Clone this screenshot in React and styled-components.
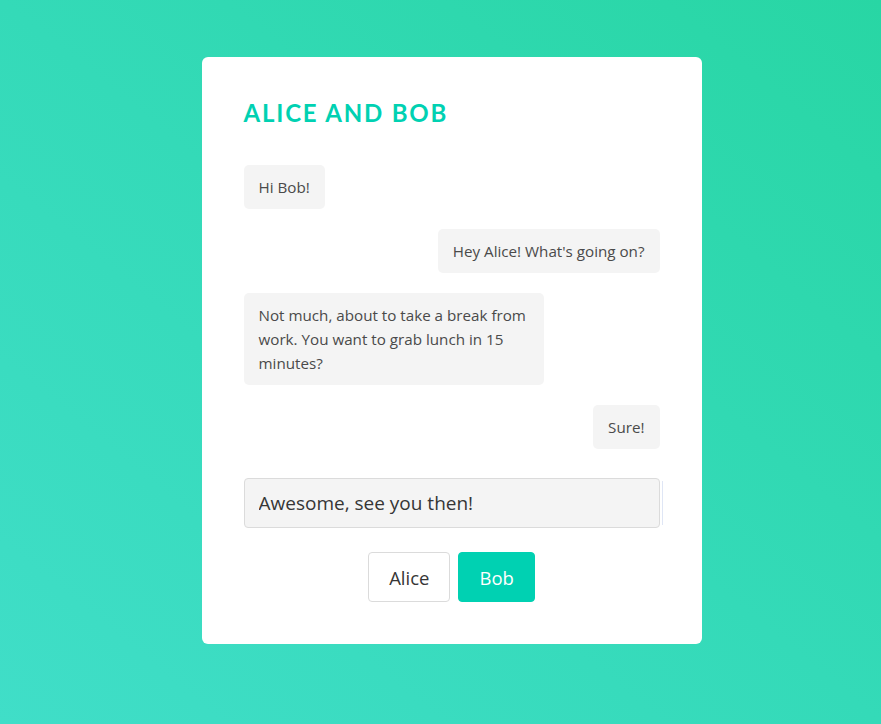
import React from "react";
import styled, { createGlobalStyle } from "styled-components";

const Global = createGlobalStyle`
  html, body { margin: 0; padding: 0; }
  body {
    min-height: 724px;
    background: linear-gradient(to top right, #40dec8 0%, #34dab8 50%, #28d6a4 100%);
    font-family: "Open Sans", "Noto Sans", sans-serif;
  }
  * { box-sizing: border-box; }
`;

const Page = styled.div`
  display: flex;
  justify-content: center;
  align-items: flex-start;
  padding: 57px 0 0 22px;
  min-height: 724px;
`;

const Card = styled.div`
  width: 500px;
  background: #fff;
  border-radius: 6px;
  padding: 42px;
  display: flex;
  flex-direction: column;
`;

const Title = styled.h1`
  margin: 0 0 38px;
  font-family: Lato, sans-serif;
  font-weight: 700;
  font-size: 24px;
  line-height: 28px;
  letter-spacing: 1.8px;
  color: #00d1b2;
  text-transform: uppercase;
`;

const Messages = styled.div`
  display: flex;
  flex-direction: column;
  gap: 20px;
`;

const Bubble = styled.div`
  align-self: ${(p) => (p.$mine ? "flex-end" : "flex-start")};
  max-width: 300px;
  background: #f4f4f4;
  border-radius: 5px;
  padding: 10px 15px;
  font-size: 15.2px;
  line-height: 24px;
  color: #4a4a4a;
`;

const Field = styled.div`
  position: relative;
  margin-top: 29px;
  &::after {
    content: "";
    position: absolute;
    right: -3px;
    top: 3px;
    bottom: 3px;
    width: 1px;
    background: #dfe6f5;
  }
`;

const Input = styled.input`
  display: block;
  width: 100%;
  height: 50px;
  background: #f4f4f4;
  border: 1px solid #dbdbdb;
  border-radius: 4px;
  padding: 0 14px;
  font-family: "Open Sans", "Noto Sans", sans-serif;
  font-size: 19px;
  color: #363636;
  outline: none;
`;

const Buttons = styled.div`
  display: flex;
  justify-content: center;
  gap: 8px;
  margin-top: 24px;
`;

const Button = styled.button`
  height: 50px;
  padding: 0 20px;
  border-radius: 4px;
  font-family: "Open Sans", "Noto Sans", sans-serif;
  font-size: 18.5px;
  cursor: pointer;
  border: 1px solid ${(p) => (p.$active ? "#00d1b2" : "#dbdbdb")};
  background: ${(p) => (p.$active ? "#00d1b2" : "#fff")};
  color: ${(p) => (p.$active ? "#fff" : "#363636")};
`;

const messages = [
  { text: "Hi Bob!", mine: false },
  { text: "Hey Alice! What's going on?", mine: true },
  { text: "Not much, about to take a break from work. You want to grab lunch in 15 minutes?", mine: false },
  { text: "Sure!", mine: true },
];

export default function App() {
  return (
    <>
      <Global />
      <Page>
        <Card>
          <Title>Alice and Bob</Title>
          <Messages>
            {messages.map((m, i) => (
              <Bubble key={i} $mine={m.mine}>{m.text}</Bubble>
            ))}
          </Messages>
          <Field>
            <Input defaultValue="Awesome, see you then!" />
          </Field>
          <Buttons>
            <Button>Alice</Button>
            <Button $active>Bob</Button>
          </Buttons>
        </Card>
      </Page>
    </>
  );
}
